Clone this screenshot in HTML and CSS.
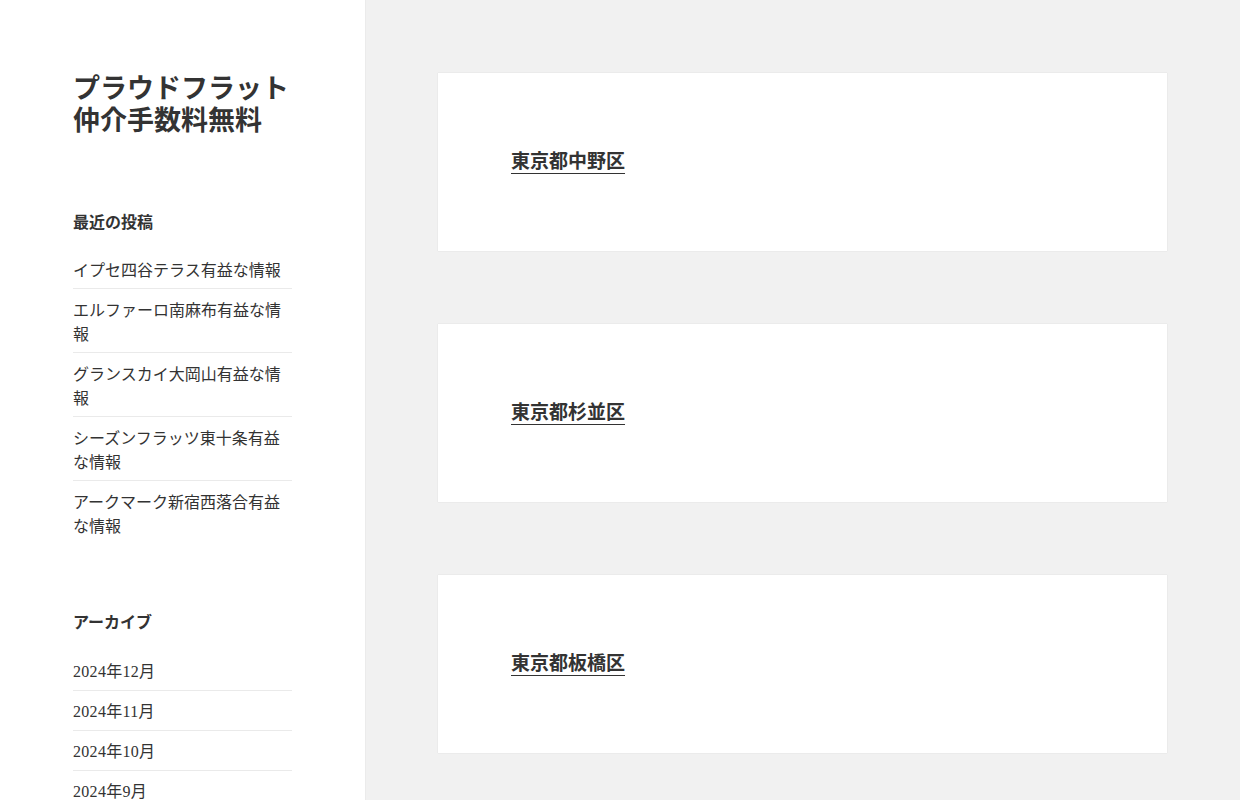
FILE: index.html
```html
<!DOCTYPE html>
<html lang="ja">
<head>
<meta charset="utf-8">
<title>プラウドフラット仲介手数料無料</title>
<link rel="stylesheet" href="styles.css">
</head>
<body>
<div class="site">
  <aside class="sidebar">
    <h1 class="site-title"><a href="#">プラウドフラット<br>仲介手数料無料</a></h1>
    <section class="widget">
      <h2 class="widget-title">最近の投稿</h2>
      <ul class="widget-list">
        <li><a href="#">イプセ四谷テラス有益な情報</a></li>
        <li><a href="#">エルファーロ南麻布有益な情報</a></li>
        <li><a href="#">グランスカイ大岡山有益な情報</a></li>
        <li><a href="#">シーズンフラッツ東十条有益な情報</a></li>
        <li><a href="#">アークマーク新宿西落合有益な情報</a></li>
      </ul>
    </section>
    <section class="widget">
      <h2 class="widget-title archive-title">アーカイブ</h2>
      <ul class="widget-list archive">
        <li><a href="#">2024年12月</a></li>
        <li><a href="#">2024年11月</a></li>
        <li><a href="#">2024年10月</a></li>
        <li><a href="#">2024年9月</a></li>
        <li><a href="#">2024年8月</a></li>
        <li><a href="#">2024年7月</a></li>
      </ul>
    </section>
  </aside>
  <main class="main">
    <article class="card"><h2 class="card-title"><a href="#">東京都中野区</a></h2></article>
    <article class="card"><h2 class="card-title"><a href="#">東京都杉並区</a></h2></article>
    <article class="card"><h2 class="card-title"><a href="#">東京都板橋区</a></h2></article>
  </main>
</div>
</body>
</html>
```

FILE: styles.css
```css
html, body {
  margin: 0;
  padding: 0;
}
body {
  background: #f1f1f1;
  color: #333;
  font-family: "Noto Sans CJK JP", "Noto Sans", sans-serif;
  font-size: 16px;
  line-height: 24px;
}
a {
  color: #333;
  text-decoration: none;
}
.site {
  display: grid;
  grid-template-columns: 365px 1fr;
  min-height: 100vh;
}
.sidebar {
  background: #fff;
  box-shadow: 0 0 1px rgba(0, 0, 0, 0.15);
  padding: 71px 73px 40px;
}
.site-title {
  margin: 0 0 74px;
  font-size: 27px;
  line-height: 32px;
  font-weight: 700;
}
.widget {
  margin-bottom: 65px;
}
.widget-title {
  margin: 0 0 16px;
  font-size: 16px;
  line-height: 24px;
  font-weight: 700;
}
.archive-title {
  margin-bottom: 18px;
}
.widget-list {
  list-style: none;
  margin: 0;
  padding: 0;
}
.widget-list li {
  padding: 7.5px 0;
}
.widget-list li + li {
  border-top: 1px solid rgba(51, 51, 51, 0.1);
}
.archive {
  font-family: "Liberation Serif", "Noto Sans CJK JP", serif;
  font-size: 16px;
}
.archive li {
  letter-spacing: 0.3px;
  padding: 8.5px 0 6.5px;
}
.main {
  padding: 73px;
  display: flex;
  flex-direction: column;
  gap: 73px;
}
.card {
  background: #fff;
  box-shadow: 0 0 1px rgba(0, 0, 0, 0.15);
  padding: 71px 73px 75px;
}
.card-title {
  margin: 0;
  font-size: 19px;
  line-height: 32px;
  font-weight: 700;
}
.card-title a {
  text-decoration: underline;
  text-decoration-thickness: 1px;
  text-underline-offset: 5px;
}
```
